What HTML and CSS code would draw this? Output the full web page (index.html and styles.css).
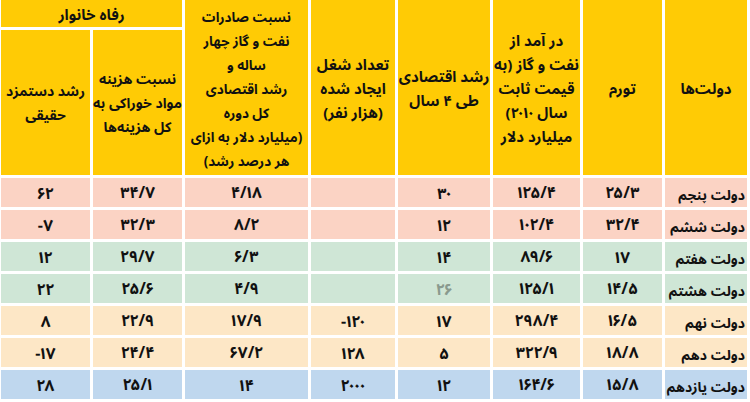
FILE: index.html
```html
<!DOCTYPE html>
<html lang="fa" dir="rtl">
<head>
<meta charset="utf-8">
<title>جدول دولت‌ها</title>
<link rel="stylesheet" href="styles.css">
</head>
<body>
<div class="table">
  <div class="hd span2 c-name">دولت‌ها</div>
  <div class="hd span2">تورم</div>
  <div class="hd span2">در آمد از<br>نفت و گاز (به<br>قیمت ثابت<br>سال ۲۰۱۰)<br>میلیارد دلار</div>
  <div class="hd span2">رشد اقتصادی<br>طی ۴ سال</div>
  <div class="hd span2">تعداد شغل<br>ایجاد شده<br>(هزار نفر)</div>
  <div class="hd span2 narrow">نسبت صادرات<br>نفت و گاز چهار<br>ساله و<br>رشد اقتصادی<br>کل دوره<br>(میلیارد دلار به ازای<br>هر درصد رشد)</div>
  <div class="hd group">رفاه خانوار</div>
  <div class="hd sub">نسبت هزینه<br>مواد خوراکی به<br>کل هزینه‌ها</div>
  <div class="hd sub">رشد دستمزد<br>حقیقی</div>

  <div class="row pink">
    <div class="name">دولت پنجم</div><div><span class="n">۲۵/۳</span></div><div><span class="n">۱۲۵/۴</span></div><div><span class="n">۳۰</span></div><div></div><div><span class="n">۴/۱۸</span></div><div><span class="n">۳۴/۷</span></div><div><span class="n">۶۲</span></div>
  </div>
  <div class="row pink">
    <div class="name">دولت ششم</div><div><span class="n">۳۲/۴</span></div><div><span class="n">۱۰۲/۴</span></div><div><span class="n">۱۲</span></div><div></div><div><span class="n">۸/۲</span></div><div><span class="n">۳۲/۳</span></div><div><span class="n">-۷</span></div>
  </div>
  <div class="row green">
    <div class="name">دولت هفتم</div><div><span class="n">۱۷</span></div><div><span class="n">۸۹/۶</span></div><div><span class="n">۱۴</span></div><div></div><div><span class="n">۶/۳</span></div><div><span class="n">۲۹/۷</span></div><div><span class="n">۱۲</span></div>
  </div>
  <div class="row green">
    <div class="name">دولت هشتم</div><div><span class="n">۱۴/۵</span></div><div><span class="n">۱۲۵/۱</span></div><div><span class="n faint">۲۶</span></div><div></div><div><span class="n">۴/۹</span></div><div><span class="n">۲۵/۶</span></div><div><span class="n">۲۲</span></div>
  </div>
  <div class="row peach">
    <div class="name">دولت نهم</div><div><span class="n">۱۶/۵</span></div><div><span class="n">۲۹۸/۴</span></div><div><span class="n">۱۷</span></div><div><span class="n">-۱۲۰</span></div><div><span class="n">۱۷/۹</span></div><div><span class="n">۲۲/۹</span></div><div><span class="n">۸</span></div>
  </div>
  <div class="row peach">
    <div class="name">دولت دهم</div><div><span class="n">۱۸/۸</span></div><div><span class="n">۳۲۲/۹</span></div><div><span class="n">۵</span></div><div><span class="n">۱۲۸</span></div><div><span class="n">۶۷/۲</span></div><div><span class="n">۲۴/۴</span></div><div><span class="n">-۱۷</span></div>
  </div>
  <div class="row blue">
    <div class="name">دولت یازدهم</div><div><span class="n">۱۵/۸</span></div><div><span class="n">۱۶۴/۶</span></div><div><span class="n">۱۲</span></div><div><span class="n">۲۰۰۰</span></div><div><span class="n">۱۴</span></div><div><span class="n">۲۵/۱</span></div><div><span class="n">۲۸</span></div>
  </div>
</div>
</body>
</html>
```

FILE: styles.css
```css
html, body {
  margin: 0;
  padding: 0;
  background: #ffffff;
}

body {
  width: 750px;
  height: 402px;
  overflow: hidden;
  font-family: "Noto Sans Arabic UI", "Noto Sans Arabic", "DejaVu Sans Condensed", "DejaVu Sans", sans-serif;
  color: #111;
}

.table {
  direction: rtl;
  display: grid;
  grid-template-columns: 82px 79px 87px 92px 84px 123px 89px 89px;
  grid-template-rows: 27px 145px repeat(7, 29px);
  gap: 3px;
  padding-right: 3px;
  width: 747px;
}

.hd {
  background: #ffcb05;
  display: flex;
  align-items: center;
  justify-content: center;
  text-align: center;
  white-space: nowrap;
  font-weight: bold;
  font-size: 15px;
  line-height: 24px;
}

.span2 {
  grid-row: 1 / span 2;
}

.group {
  grid-column: 7 / span 2;
  grid-row: 1;
}

.sub {
  grid-row: 2;
  font-size: 14px;
}

.narrow {
  font-size: 13.5px;
  padding-top: 2px;
}

.row {
  display: contents;
}

.row > div {
  display: flex;
  align-items: center;
  justify-content: center;
  font-weight: bold;
  font-size: 16px;
  white-space: nowrap;
}

.row > .name {
  justify-content: flex-start;
  padding-right: 2px;
  padding-top: 4px;
  font-size: 14px;
}

.n {
  direction: ltr;
  unicode-bidi: isolate;
  letter-spacing: 1px;
}

.faint {
  color: #8a9a8e;
}

.pink > div { background: #fbd3c4; }
.green > div { background: #cfe6d6; }
.peach > div { background: #fde7c6; }
.blue > div { background: #bfd7ee; }
```
